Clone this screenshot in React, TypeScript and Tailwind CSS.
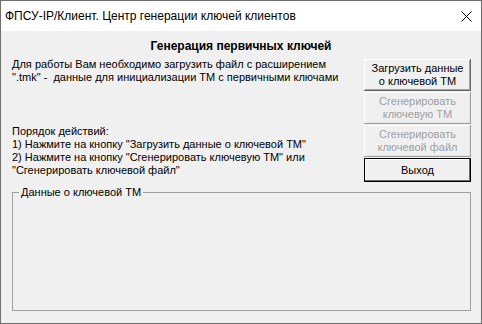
const raised =
  "shadow-[inset_-1px_-1px_0_#696969,inset_1px_1px_0_#ffffff,inset_-2px_-2px_0_#a0a0a0]";
const raisedDisabled =
  "shadow-[inset_-1px_-1px_0_#a0a0a0,inset_1px_1px_0_#ffffff,inset_-2px_-2px_0_#e3e3e3]";

const App = () => (
  <div
    className="w-[482px] h-[324px] border border-[#6e6e6e] flex flex-col text-black"
    style={{ fontFamily: '"Liberation Sans", Arial, sans-serif' }}
  >
    {/* title bar */}
    <div className="h-[30px] bg-white flex items-center pl-[4px] pr-[9px]">
      <span className="text-[12px] leading-[16px] whitespace-nowrap">
        ФПСУ-IP/Клиент. Центр генерации ключей клиентов
      </span>
      <svg className="ml-auto" width="11" height="11" viewBox="0 0 11 11">
        <path d="M0.5 0.5 L10.5 10.5 M10.5 0.5 L0.5 10.5" stroke="#000" strokeWidth="1" />
      </svg>
    </div>

    <div className="flex-1 bg-[#f0f0f0] flex flex-col text-[11px] leading-[13px]">
      <div className="pt-[8px] text-center font-bold text-[12px] leading-[14px]">
        Генерация первичных ключей
      </div>

      <div className="flex mt-[5px] pl-[11px] pr-[10px]">
        <div className="flex flex-col whitespace-nowrap">
          <p>
            Для работы Вам необходимо загрузить файл с расширением
            <br />
            ".tmk" -&nbsp; данные для инициализации ТМ с первичными ключами
          </p>
          <p className="mt-[41px]">
            Порядок действий:
            <br />
            1) Нажмите на кнопку "Загрузить данные о ключевой ТМ"
            <br />
            2) Нажмите на кнопку "Сгенерировать ключевую ТМ" или
            <br />
            "Сгенерировать ключевой файл"
          </p>
        </div>

        <div className="ml-auto mt-[1px] w-[107px] flex flex-col gap-[1px]">
          <button className={`h-[32px] bg-[#f0f0f0] text-center ${raised}`}>
            Загрузить данные
            <br />о ключевой ТМ
          </button>
          <button disabled className={`h-[32px] bg-[#f0f0f0] text-center text-[#a0a0a0] ${raisedDisabled}`}>
            Сгенерировать
            <br />
            ключевую ТМ
          </button>
          <button disabled className={`h-[32px] bg-[#f0f0f0] text-center text-[#a0a0a0] ${raisedDisabled}`}>
            Сгенерировать
            <br />
            ключевой файл
          </button>
          <button className="h-[24px] border border-[#000] bg-[#f0f0f0] shadow-[inset_-1px_-1px_0_#696969,inset_1px_1px_0_#ffffff]">
            Выход
          </button>
        </div>
      </div>

      <fieldset className="mt-[4px] ml-[11px] mr-[10px] h-[125px] border border-[#a0a0a0] px-[6px]">
        <legend className="px-[2px]">Данные о ключевой ТМ</legend>
      </fieldset>
    </div>
  </div>
);

export default App;
